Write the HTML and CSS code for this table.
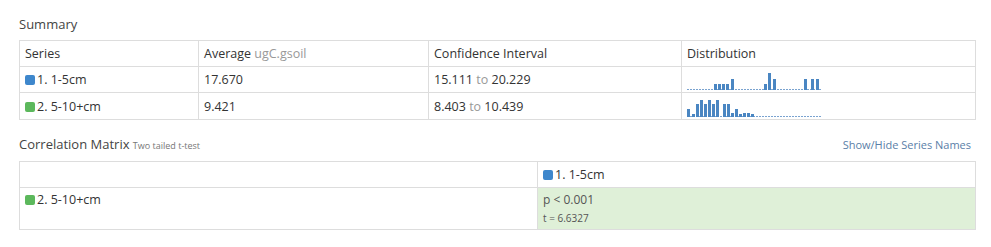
FILE: index.html
```html
<!DOCTYPE html>
<html>
<head>
<meta charset="utf-8">
<link rel="stylesheet" href="styles.css">
</head>
<body>
<div class="page">
  <div class="title">Summary</div>
  <table class="grid summary">
    <colgroup><col style="width:179px"><col style="width:230px"><col style="width:253px"><col style="width:294px"></colgroup>
    <tr class="hdr"><td>Series</td><td>Average <span class="muted">ugC.gsoil</span></td><td>Confidence Interval</td><td>Distribution</td></tr>
    <tr><td><span class="sq blue"></span>1. 1-5cm</td><td>17.670</td><td>15.111 <span class="muted">to</span> 20.229</td>
      <td class="spark"><svg width="134" height="20" viewBox="0 0 134 20">
        <line x1="0" y1="19.5" x2="134" y2="19.5" class="base"/>
        <rect x="27" y="14" width="3" height="6"/><rect x="31" y="14" width="3" height="6"/><rect x="35" y="14" width="3" height="6"/><rect x="39" y="14" width="3" height="6"/><rect x="44" y="9" width="3" height="11"/>
        <rect x="77" y="14" width="3" height="6"/><rect x="81" y="3" width="3" height="17"/><rect x="86" y="9" width="3" height="11"/>
        <rect x="117" y="9" width="3" height="11"/><rect x="124" y="9" width="3" height="11"/><rect x="129" y="9" width="3" height="11"/>
      </svg></td></tr>
    <tr><td><span class="sq green"></span>2. 5-10+cm</td><td>9.421</td><td>8.403 <span class="muted">to</span> 10.439</td>
      <td class="spark"><svg width="134" height="20" viewBox="0 0 134 20">
        <line x1="0" y1="19.5" x2="134" y2="19.5" class="base"/>
        <rect x="0" y="12" width="3" height="8"/><rect x="5" y="17" width="3" height="3"/><rect x="9" y="7" width="3" height="13"/><rect x="13" y="3" width="3" height="17"/><rect x="17" y="7" width="3" height="13"/><rect x="21" y="3" width="3" height="17"/><rect x="25" y="7" width="3" height="13"/><rect x="29" y="3" width="3" height="17"/>
        <rect x="36" y="7" width="3" height="13"/><rect x="40" y="7" width="3" height="13"/><rect x="44" y="16" width="3" height="4"/><rect x="48" y="12" width="3" height="8"/><rect x="52" y="17" width="3" height="3"/><rect x="56" y="16" width="3" height="4"/><rect x="60" y="16" width="3" height="4"/><rect x="64" y="17" width="3" height="3"/>
      </svg></td></tr>
  </table>

  <div class="title-row">
    <div class="title">Correlation Matrix <span class="sub">Two tailed t-test</span></div>
    <div class="link">Show/Hide Series Names</div>
  </div>
  <table class="grid matrix">
    <colgroup><col style="width:518px"><col style="width:438px"></colgroup>
    <tr class="hdr"><td></td><td><span class="sq blue"></span>1. 1-5cm</td></tr>
    <tr class="mrow"><td><span class="sq green"></span>2. 5-10+cm</td><td class="sig"><div class="p">p &lt; 0.001</div><div class="t">t = 6.6327</div></td></tr>
  </table>
</div>
</body>
</html>
```
FILE: styles.css
```css
html, body { margin: 0; padding: 0; background: #fff; }
body { font-family: "Open Sans", "Liberation Sans", sans-serif; color: #333; }
.page { padding: 15px 16px 0 19px; }
.title { font-size: 13px; line-height: 18px; color: #444; }
.summary { margin-top: 7px; }
.grid { border-collapse: collapse; table-layout: fixed; width: 956px; font-size: 12.5px; }
.grid td { border: 1px solid #ddd; padding: 0 5px; height: 25px; vertical-align: middle; white-space: nowrap; }
.summary tr:last-child td { height: 26px; }
.muted { color: #999; }
.sq { display: inline-block; width: 10px; height: 10px; border-radius: 2px; margin-right: 2px; vertical-align: -1px; }
.blue { background: #3e87cc; }
.green { background: #5cb85c; }
.spark { padding-top: 0; padding-bottom: 0; }
.spark svg { display: block; margin-top: 1px; }
.spark rect { fill: #4a86c2; }
.spark .base { stroke: #7aa3d0; stroke-width: 1; stroke-dasharray: 2 1; }
.title-row { display: flex; justify-content: space-between; align-items: baseline; margin-top: 15px; }
.sub { font-size: 9px; color: #777; }
.link { font-size: 11px; color: #5a80a8; padding-right: 4px; }
.matrix { margin-top: 6px; }
.mrow td { height: 38px; vertical-align: top; padding-top: 3px; }
.sig { background: #dff0d8; }
.p { font-size: 12px; line-height: 17px; color: #555; }
.t { font-size: 10px; line-height: 14px; color: #555; margin-top: 3px; }
```
